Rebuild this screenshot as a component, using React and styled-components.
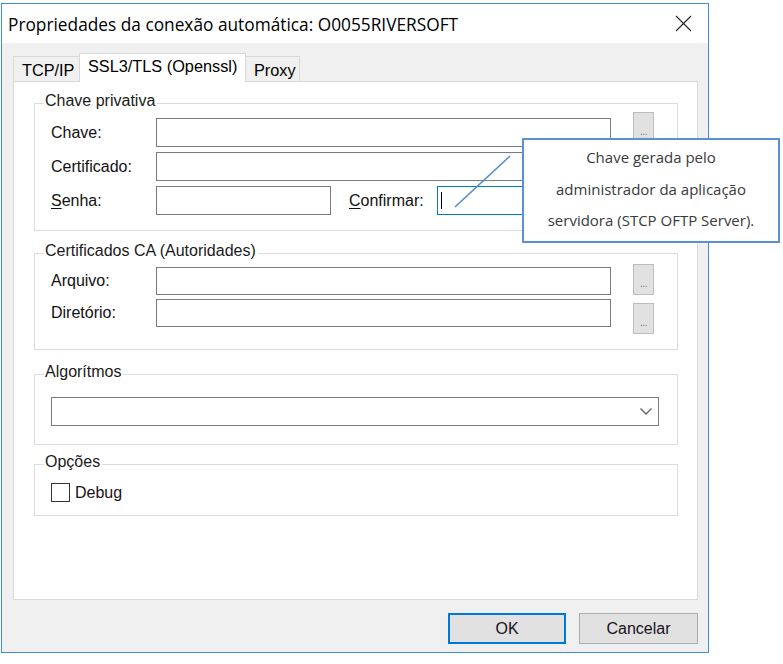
import React from "react";
import styled, { createGlobalStyle, css } from "styled-components";

const Global = createGlobalStyle`
  * { box-sizing: border-box; }
  html, body { margin: 0; padding: 0; background: #ffffff; }
  body { font-family: "Liberation Sans", Arial, sans-serif; color: #000; }
`;

const Page = styled.div`
  position: relative;
  width: 783px;
  height: 664px;
  padding: 3px 0 0 1px;
  background: #ffffff;
  overflow: hidden;
`;

const Window = styled.div`
  width: 708px;
  height: 650px;
  border: 1px solid #3f8fdc;
  display: flex;
  flex-direction: column;
  background: #f0f0f0;
`;

const TitleBar = styled.div`
  height: 39px;
  background: #ffffff;
  display: flex;
  align-items: center;
  justify-content: space-between;
  padding: 0 16px 0 6px;
`;

const Title = styled.div`
  font-family: "Open Sans", "Noto Sans", sans-serif;
  font-size: 17.3px;
  color: #000;
  margin-top: 1px;
`;

const CloseIcon = styled.svg`
  width: 17px;
  height: 17px;
  display: block;
`;

const Body = styled.div`
  flex: 1;
  display: flex;
  flex-direction: column;
  padding: 10px 10px 8px 11px;
`;

const TabStrip = styled.div`
  display: flex;
  align-items: flex-end;
  height: 29px;
  padding-left: 1px;
  position: relative;
  z-index: 1;
  margin-bottom: -1px;
`;

const Tab = styled.div`
  font-size: 16.3px;
  width: ${(p) => p.$w}px;
  height: ${(p) => (p.$active ? "29px" : "26px")};
  padding: ${(p) => (p.$active ? "3px 0 0 8px" : "4px 0 0 8px")};
  background: ${(p) => (p.$active ? "#ffffff" : "#f0f0f0")};
  border: 1px solid #d9d9d9;
  border-bottom: ${(p) => (p.$active ? "none" : "1px solid #d9d9d9")};
  margin-left: -1px;
  white-space: nowrap;
  overflow: hidden;
  color: #000;
  ${(p) =>
    p.$active &&
    css`
      position: relative;
      z-index: 2;
    `}
`;

const Panel = styled.div`
  height: 519px;
  background: #ffffff;
  border: 1px solid #d9d9d9;
  padding: 10px 19px 0 20px;
  display: flex;
  flex-direction: column;
`;

const Group = styled.fieldset`
  margin: ${(p) => p.$mt || 0}px 0 0 0;
  border: 1px solid #dcdcdc;
  padding: ${(p) => p.$pad};
  min-width: 0;
`;

const Legend = styled.legend`
  font-size: 16px;
  line-height: 18px;
  padding: 0 2px 4px 1px;
  margin-left: -7px;
  color: #1a1a1a;
`;

const FormGrid = styled.div`
  display: grid;
  grid-template-columns: 105px 455px 43px;
  row-gap: ${(p) => p.$gap}px;
  grid-auto-rows: ${(p) => p.$row}px;
  align-items: start;
`;

const Label = styled.label`
  font-size: 16px;
  line-height: 18px;
  color: #111;
  align-self: center;
  white-space: nowrap;
`;

const Underlined = styled.span`
  text-decoration: underline;
  text-underline-offset: 2px;
`;

const TextBox = styled.div`
  height: ${(p) => p.$h || 29}px;
  width: ${(p) => (p.$w ? `${p.$w}px` : "100%")};
  background: #ffffff;
  border: 1px solid ${(p) => (p.$focus ? "#0078d7" : "#7a7a7a")};
  display: flex;
  align-items: center;
  padding-left: 3px;
  flex: ${(p) => (p.$grow ? 1 : "none")};
`;

const Caret = styled.span`
  width: 1px;
  height: 17px;
  background: #000;
`;

const SplitRow = styled.div`
  display: flex;
  align-items: center;
  grid-column: 2 / 3;
`;

const ConfirmLabel = styled(Label)`
  width: 88px;
  margin-left: 18px;
  flex: none;
`;

const Ellipsis = styled.button`
  width: 21px;
  height: 31px;
  justify-self: end;
  margin-top: ${(p) => p.$mt || 0}px;
  padding: 0 0 5px 0;
  border: 1px solid #bcbcbc;
  background: #e1e1e1;
  color: #7a6a8a;
  font-family: "Liberation Sans", Arial, sans-serif;
  font-size: 10px;
  line-height: 1;
  display: flex;
  align-items: flex-end;
  justify-content: center;
  letter-spacing: -0.5px;
`;

const CAWrap = styled.div`
  display: flex;
`;

const CAFields = styled.div`
  display: grid;
  grid-template-columns: 105px 455px;
  grid-auto-rows: 28px;
  row-gap: 4px;
  margin-top: 3px;
`;

const ButtonStack = styled.div`
  display: flex;
  flex-direction: column;
  gap: 8px;
  margin-left: 22px;
`;

const Select = styled.div`
  height: 29px;
  border: 1px solid #7a7a7a;
  background: #ffffff;
  display: flex;
  align-items: center;
  justify-content: flex-end;
  padding-right: 6px;
`;

const CheckRow = styled.div`
  display: flex;
  align-items: center;
  gap: 5px;
`;

const CheckBox = styled.span`
  width: 19px;
  height: 19px;
  border: 1px solid #333333;
  background: #ffffff;
  display: block;
`;

const CheckText = styled.span`
  font-size: 16px;
  line-height: 18px;
  color: #1a1020;
`;

const ButtonRow = styled.div`
  display: flex;
  justify-content: flex-end;
  gap: 13px;
  margin-top: 13px;
`;

const DlgButton = styled.button`
  width: ${(p) => p.$w}px;
  height: 31px;
  background: #e1e1e1;
  border: ${(p) => (p.$default ? "2px solid #0078d7" : "1px solid #adadad")};
  font-family: "Liberation Sans", Arial, sans-serif;
  font-size: 16px;
  color: #1a1020;
  padding: 0;
`;

const Callout = styled.div`
  position: absolute;
  left: 522px;
  top: 138px;
  width: 258px;
  height: 105px;
  border: 2px solid #5b8fd6;
  background: #ffffff;
  display: flex;
  flex-direction: column;
  align-items: center;
  justify-content: center;
  padding-bottom: 2px;
  z-index: 5;
`;

const CalloutLine = styled.div`
  font-family: "Open Sans", "Noto Sans", sans-serif;
  font-size: 15px;
  line-height: 31.5px;
  color: #3a3a3a;
  white-space: nowrap;
`;

const Leader = styled.svg`
  position: absolute;
  left: 450px;
  top: 150px;
  width: 70px;
  height: 65px;
  z-index: 6;
`;

export default function App() {
  return (
    <>
      <Global />
      <Page>
        <Window>
          <TitleBar>
            <Title>Propriedades da conexão automática: O0055RIVERSOFT</Title>
            <CloseIcon viewBox="0 0 17 17">
              <path d="M1 1 L16 16 M16 1 L1 16" stroke="#2a2a2a" strokeWidth="1.2" fill="none" />
            </CloseIcon>
          </TitleBar>
          <Body>
            <TabStrip>
              <Tab $w={67}>TCP/IP</Tab>
              <Tab $active $w={167}>SSL3/TLS (Openssl)</Tab>
              <Tab $w={55}>Proxy</Tab>
            </TabStrip>
            <Panel>
              <Group $pad="4px 22px 15px 16px">
                <Legend>Chave privativa</Legend>
                <FormGrid $row={29} $gap={5}>
                  <Label>Chave:</Label>
                  <TextBox />
                  <Ellipsis $mt={-6}>...</Ellipsis>
                  <Label>Certificado:</Label>
                  <TextBox />
                  <span />
                  <Label>
                    <Underlined>S</Underlined>enha:
                  </Label>
                  <SplitRow>
                    <TextBox $w={175} />
                    <ConfirmLabel>
                      <Underlined>C</Underlined>onfirmar:
                    </ConfirmLabel>
                    <TextBox $grow $focus>
                      <Caret />
                    </TextBox>
                  </SplitRow>
                </FormGrid>
              </Group>

              <Group $mt={11} $pad="0 22px 15px 16px">
                <Legend>Certificados CA (Autoridades)</Legend>
                <CAWrap>
                  <CAFields>
                    <Label>Arquivo:</Label>
                    <TextBox $h={28} />
                    <Label>Diretório:</Label>
                    <TextBox $h={28} />
                  </CAFields>
                  <ButtonStack>
                    <Ellipsis>...</Ellipsis>
                    <Ellipsis>...</Ellipsis>
                  </ButtonStack>
                </CAWrap>
              </Group>

              <Group $mt={13} $pad="12px 18px 18px 16px">
                <Legend>Algorítmos</Legend>
                <Select>
                  <svg width="12" height="7" viewBox="0 0 12 7">
                    <path d="M0.5 0.5 L6 6 L11.5 0.5" stroke="#606060" strokeWidth="1.3" fill="none" />
                  </svg>
                </Select>
              </Group>

              <Group $mt={8} $pad="8px 16px 13px 16px">
                <Legend>Opções</Legend>
                <CheckRow>
                  <CheckBox />
                  <CheckText>Debug</CheckText>
                </CheckRow>
              </Group>
            </Panel>
            <ButtonRow>
              <DlgButton $default $w={118}>OK</DlgButton>
              <DlgButton $w={119}>Cancelar</DlgButton>
            </ButtonRow>
          </Body>
        </Window>

        <Leader viewBox="0 0 70 65">
          <line x1="5" y1="57" x2="60" y2="6" stroke="#4f8ad6" strokeWidth="1.6" />
        </Leader>
        <Callout>
          <CalloutLine>Chave gerada pelo</CalloutLine>
          <CalloutLine>administrador da aplicação</CalloutLine>
          <CalloutLine>servidora (STCP OFTP Server).</CalloutLine>
        </Callout>
      </Page>
    </>
  );
}
